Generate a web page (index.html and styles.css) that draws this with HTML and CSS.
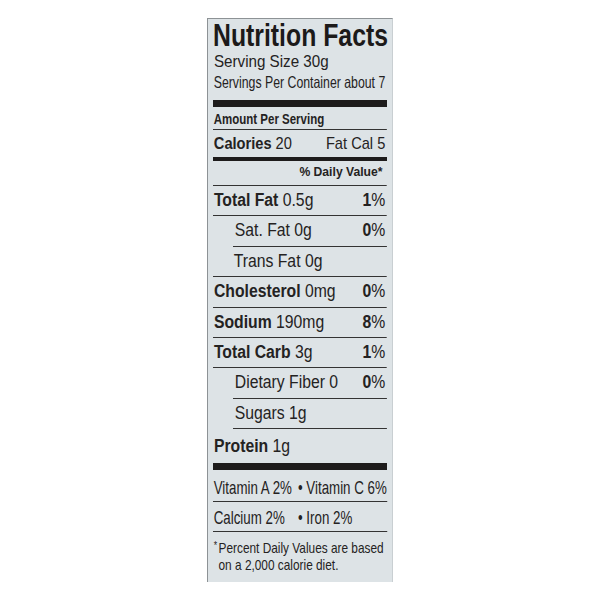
FILE: index.html
```html
<!DOCTYPE html>
<html>
<head>
<meta charset="utf-8">
<link rel="stylesheet" href="styles.css">
</head>
<body>
<div class="label">
  <div class="title sx">Nutrition Facts</div>
  <div class="serv sx wide">Serving Size 30g</div>
  <div class="serv sx">Servings Per Container about 7</div>
  <div class="bar thick"></div>
  <div class="amount sx">Amount Per Serving</div>
  <div class="cal sx"><span><b>Calories</b> 20</span><span>Fat Cal 5</span></div>
  <div class="bar med"></div>
  <div class="dv sx">% Daily Value*</div>
  <div class="row sx"><span><b>Total Fat</b> 0.5g</span><span><b>1</b>%</span></div>
  <div class="row sx ind"><span>Sat. Fat 0g</span><span><b>0</b>%</span></div>
  <div class="row sx sub"><span>Trans Fat 0g</span></div>
  <div class="row sx"><span><b>Cholesterol</b> 0mg</span><span><b>0</b>%</span></div>
  <div class="row sx"><span><b>Sodium</b> 190mg</span><span><b>8</b>%</span></div>
  <div class="row sx"><span><b>Total Carb</b> 3g</span><span><b>1</b>%</span></div>
  <div class="row sx ind"><span>Dietary Fiber 0</span><span><b>0</b>%</span></div>
  <div class="row sx ind"><span>Sugars 1g</span></div>
  <div class="row sx prot"><span><b>Protein</b> 1g</span></div>
  <div class="bar heavy"></div>
  <div class="vit sx"><span class="vcol">Vitamin A 2%</span><span>• Vitamin C 6%</span></div>
  <div class="vit sx min"><span class="vcol">Calcium 2%</span><span>• Iron 2%</span></div>
  <div class="foot sx"><span class="star">*</span>Percent Daily Values are based<br>on a 2,000 calorie diet.</div>
</div>
</body>
</html>
```

FILE: styles.css
```css
html, body {
  margin: 0;
  padding: 0;
  background: #ffffff;
}
body {
  width: 600px;
  height: 600px;
  display: flex;
  align-items: center;
  justify-content: center;
  font-family: "Liberation Sans", Arial, sans-serif;
  color: #242222;
}
.label {
  box-sizing: border-box;
  width: 186px;
  height: 564px;
  background: #dde3e6;
  border-left: 1px solid #8d9295;
  border-top: 1px solid #8d9295;
  border-right: 1px solid #c9cfd2;
  padding: 2px 5px 0 5px;
  display: flex;
  flex-direction: column;
  align-items: flex-start;
}
b { font-weight: 700; }

/* condensed type: each line is drawn with a horizontal scale */
.sx {
  box-sizing: border-box;
  flex: none;
  transform: scaleX(var(--s));
  transform-origin: 0 0;
  width: calc(174px / var(--s));
  white-space: nowrap;
}
.ind {
  margin-left: 20px;
  width: calc(154px / var(--s));
}

.title {
  --s: 0.8;
  font-weight: 700;
  font-size: 31px;
  line-height: 30px;
  height: 30px;
  color: #1c1a1a;
}
.serv {
  --s: 0.745;
  font-size: 16.5px;
  line-height: 21px;
  height: 21px;
  padding-left: 1px;
}
.serv.wide { --s: 0.92; }
.bar {
  background: #1e1c1c;
  align-self: stretch;
  flex: none;
}
.thick { height: 7px; margin-top: 7px; }
.med { height: 4px; }
.heavy { height: 7px; }
.amount {
  --s: 0.82;
  font-weight: 700;
  font-size: 14px;
  height: 23px;
  padding-top: 3px;
  padding-left: 1px;
  line-height: 19px;
  border-bottom: 1px solid #333;
}
.cal {
  --s: 0.86;
  display: flex;
  justify-content: space-between;
  font-size: 17px;
  line-height: 27px;
  height: 27px;
  padding-left: 1px;
  padding-right: 2px;
}
.dv {
  --s: 0.9;
  text-align: right;
  font-weight: 700;
  font-size: 13.5px;
  line-height: 22px;
  height: 25px;
  padding-right: 5px;
  border-bottom: 1px solid #333;
}
.row {
  --s: 0.9;
  display: flex;
  justify-content: space-between;
  font-size: 17.5px;
  height: 30.4px;
  line-height: 28px;
  padding-left: 1px;
  padding-right: 2px;
  border-bottom: 1px solid #333;
}
.row.sub { padding-left: 23px; }
.row.ind { padding-left: 2px; }
.row.prot { border-bottom: none; height: 34px; line-height: 34px; }
.vit {
  --s: 0.72;
  display: flex;
  font-size: 18.5px;
  height: 32px;
  padding-top: 3px;
  line-height: 29px;
  border-bottom: 1px solid #333;
}
.vit.min { height: 30px; padding-top: 2px; line-height: 28px; }
.vcol { width: calc(85px / 0.72); padding-left: 1px; box-sizing: border-box; }
.foot {
  --s: 0.79;
  font-size: 15px;
  line-height: 17px;
  padding-top: 7px;
  padding-left: 7px;
}
.star {
  display: inline-block;
  width: 6px;
  margin-left: -6px;
  vertical-align: top;
  font-size: 11px;
  line-height: 12px;
}
```
